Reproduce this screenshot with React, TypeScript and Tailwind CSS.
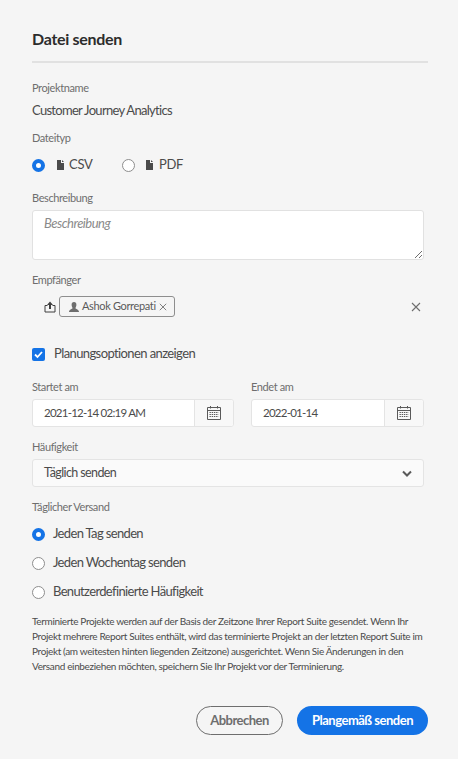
const Radio = ({ checked }: { checked?: boolean }) =>
    checked ? (
        <span className="block w-[13px] h-[13px] shrink-0 rounded-full border-[4px] border-[#1473e6] bg-white" />
    ) : (
        <span className="block w-[13px] h-[13px] shrink-0 rounded-full border-[1.5px] border-[#8e8e8e] bg-white" />
    );

const Label = ({ children }: { children: React.ReactNode }) => (
    <div className="h-4 leading-4 text-[11px] tracking-[-0.4px] text-[#6e6e6e]">{children}</div>
);

const FileIcon = () => (
    <svg width="9" height="10" viewBox="0 0 9 10" className="block shrink-0 text-[#4b4b4b]">
        <path fill="currentColor" d="M1 0h4v3h3v7H1zM6 0l2 2H6z" />
    </svg>
);

const Close = ({ size }: { size: number }) => (
    <svg width={size} height={size} viewBox="0 0 10 10" className="block shrink-0 text-[#6e6e6e]">
        <path stroke="currentColor" strokeWidth="1.1" d="M1 1l8 8M9 1l-8 8" />
    </svg>
);

const Calendar = () => (
    <svg width="16" height="16" viewBox="0 0 16 16" className="text-[#5a5a5a]">
        <path fill="none" stroke="currentColor" d="M1.500 2.500h13v12h-13zM1.500 5.500h13" />
        <path stroke="currentColor" d="M4.500 1v2.500M11.500 1v2.500" />
        <path stroke="currentColor" strokeDasharray="1.4 .8" d="M3.500 7.500h9M3.500 9.500h9M3.500 11.500h9" />
    </svg>
);

const DateField = ({ value, width }: { value: string; width: string }) => (
    <div className={`${width} h-[28px] flex rounded-[3px] border border-[#e4e4e4] bg-white overflow-hidden`}>
        <div className="flex-grow pl-[11px] leading-[26px] text-[11.5px] tracking-[-0.75px] text-[#4b4b4b]">{value}</div>
        <div className="w-[39px] shrink-0 flex items-center justify-center border-l border-[#e4e4e4] bg-[#f8f8f8]">
            <Calendar />
        </div>
    </div>
);

export default function App() {
    return (
        <div className="w-[458px] h-[759px] bg-[#f5f5f5] pl-8 pr-[30px] overflow-hidden font-['Lato','Noto_Sans',sans-serif]">
            <div className="h-[63px] border-b-2 border-[#e1e1e1] pt-[28px]">
                <h1 className="leading-[22px] text-[16px] font-bold tracking-[-0.3px] text-[#2c2c2c]">Datei senden</h1>
            </div>

            <div className="pt-[17px]">
                <Label>Projektname</Label>
                <div className="mt-[5px] h-[18px] leading-[18px] text-[13px] tracking-[-0.7px] text-[#4b4b4b]">Customer Journey Analytics</div>
            </div>

            <div className="mt-[11px]">
                <Label>Dateityp</Label>
                <div className="mt-[12px] h-[14px] flex items-center text-[13px] tracking-[-0.3px] text-[#4b4b4b]">
                    <Radio checked />
                    <span className="ml-[11px]"><FileIcon /></span>
                    <span className="ml-[4px] w-[21px]">CSV</span>
                    <span className="ml-[32px]"><Radio /></span>
                    <span className="ml-[10px]"><FileIcon /></span>
                    <span className="ml-[5px]">PDF</span>
                </div>
            </div>

            <div className="mt-[18px]">
                <Label>Beschreibung</Label>
                <div className="relative mt-[4px] w-[392px] h-[50px] rounded-[3px] border border-[#e1e1e1] bg-white pl-[11px] pt-[3px] text-[13px] italic leading-[18px] tracking-[-0.5px] text-[#8a8a8a]">
                    Beschreibung
                    <svg width="9" height="9" viewBox="0 0 9 9" className="absolute right-0 bottom-0 text-[#6e6e6e]">
                        <path stroke="currentColor" d="M1 8l7-7M5 8l3-3" />
                    </svg>
                </div>
            </div>

            <div className="mt-[12px]">
                <Label>Empfänger</Label>
                <div className="mt-[8px] w-[392px] h-[21px] flex items-center">
                    <svg width="12" height="12" viewBox="0 0 12 12" className="ml-[12px] shrink-0 text-[#3f3f3f]">
                        <path fill="currentColor" d="M6 .5L9 4H7v4H5V4H3z" />
                        <path fill="none" stroke="currentColor" d="M3.500 4.500H1v6.500h10V4.500H8.500" />
                    </svg>
                    <div className="ml-[3px] h-[21px] w-[116px] flex items-center rounded-[3px] border border-[#8e8e8e] pl-[9px] text-[11px] tracking-[-0.35px] text-[#5a5a5a]">
                        <svg width="10" height="10" viewBox="0 0 10 10" className="shrink-0 text-[#6e6e6e]">
                            <path fill="currentColor" d="M5 0a2.400 2.800 0 0 1 2.400 2.800C7.400 4.500 6.500 5.500 6.500 6.200c0 .8 3.500 1 3.500 3.800H0c0-2.800 3.500-3 3.500-3.800C3.500 5.500 2.600 4.500 2.600 2.800A2.400 2.800 0 0 1 5 0z" />
                        </svg>
                        <span className="ml-[3px] w-[74px] whitespace-nowrap">Ashok Gorrepati</span>
                        <span className="ml-[3px]"><Close size={8} /></span>
                    </div>
                    <span className="ml-auto mr-[3px]"><Close size={10} /></span>
                </div>
            </div>

            <div className="mt-[30px] h-[14px] flex items-center">
                <span className="w-[13px] h-[13px] flex items-center justify-center rounded-[2px] bg-[#1473e6]">
                    <svg width="9" height="9" viewBox="0 0 9 9" className="text-white">
                        <path fill="none" stroke="currentColor" strokeWidth="1.800" d="M1 4.500l2.500 2.500L8 2" />
                    </svg>
                </span>
                <span className="ml-[9px] text-[13px] tracking-[-0.6px] text-[#4b4b4b]">Planungsoptionen anzeigen</span>
            </div>

            <div className="mt-[18px] flex gap-[17px]">
                <div>
                    <Label>Startet am</Label>
                    <div className="mt-[4px]"><DateField value="2021-12-14 02:19 AM" width="w-[202px]" /></div>
                </div>
                <div>
                    <Label>Endet am</Label>
                    <div className="mt-[4px]"><DateField value="2022-01-14" width="w-[173px]" /></div>
                </div>
            </div>

            <div className="mt-[12px]">
                <Label>Häufigkeit</Label>
                <div className="mt-[4px] w-[392px] h-[28px] flex items-center justify-between rounded-[3px] border border-[#e4e4e4] bg-[#fafafa] pl-[11px] pr-[11px] pt-px text-[12.5px] tracking-[-0.6px] text-[#4b4b4b]">
                    Täglich senden
                    <svg width="10" height="7" viewBox="0 0 10 7" className="text-[#5a5a5a]">
                        <path fill="none" stroke="currentColor" strokeWidth="2" d="M1 1.500l4 4 4-4" />
                    </svg>
                </div>
            </div>

            <div className="mt-[12px]">
                <Label>Täglicher Versand</Label>
                <div className="mt-[12px] flex flex-col gap-[15px] text-[13px] tracking-[-0.65px] text-[#4b4b4b]">
                    {["Jeden Tag senden", "Jeden Wochentag senden", "Benutzerdefinierte Häufigkeit"].map((t, i) => (
                        <div key={t} className="h-[14px] flex items-center">
                            <Radio checked={i === 0} />
                            <span className="ml-[8px]">{t}</span>
                        </div>
                    ))}
                </div>
            </div>

            <p className="mt-[15px] w-[396px] text-[10px] leading-[15px] tracking-[-0.35px] text-[#4b4b4b]">
                Terminierte Projekte werden auf der Basis der Zeitzone Ihrer Report Suite gesendet. Wenn Ihr Projekt mehrere Report Suites enthält, wird das terminierte Projekt an der letzten Report Suite im Projekt (am weitesten hinten liegenden Zeitzone) ausgerichtet. Wenn Sie Änderungen in den Versand einbeziehen möchten, speichern Sie Ihr Projekt vor der Terminierung.
            </p>

            <div className="mt-[32px] flex justify-end gap-[14px] text-[13px] font-bold tracking-[-0.5px]">
                <button className="w-[87px] h-[29px] rounded-full border border-[#6e6e6e] text-[#6e6e6e]">Abbrechen</button>
                <button className="w-[131px] h-[29px] rounded-full bg-[#1473e6] text-white">Plangemäß senden</button>
            </div>
        </div>
    );
}
